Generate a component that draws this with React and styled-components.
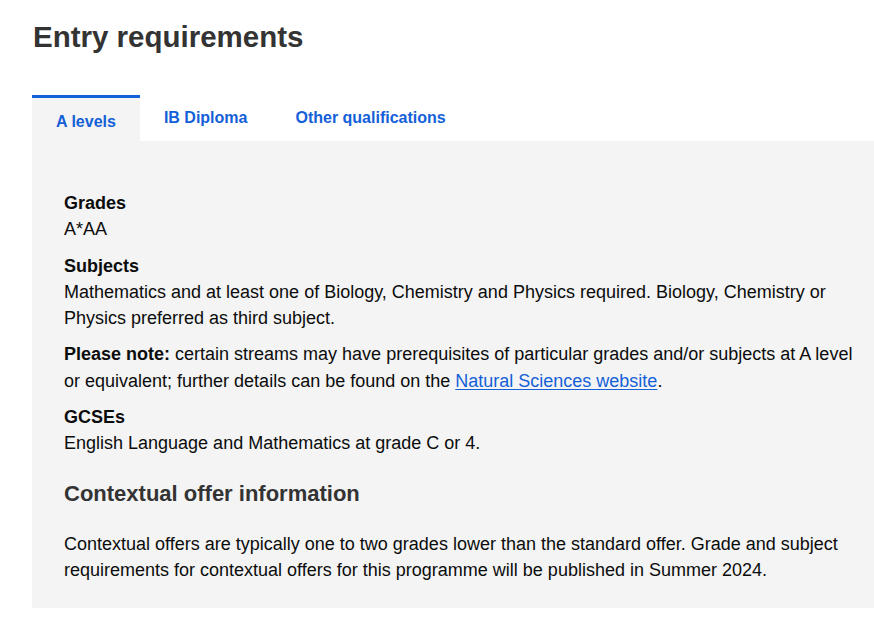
import { useState } from "react";
import styled, { createGlobalStyle } from "styled-components";

const GlobalStyle = createGlobalStyle`
  body {
    margin: 0;
    background: #ffffff;
    font-family: "Liberation Sans", Arial, Helvetica, sans-serif;
    color: #0b0c0c;
  }
`;

const tabs = ["A levels", "IB Diploma", "Other qualifications"];

function App() {
  const [active, setActive] = useState(0);

  return (
    <Page>
      <GlobalStyle />
      <Title>Entry requirements</Title>
      <TabList>
        {tabs.map((t, i) => (
          <Tab key={t} $active={i === active} onClick={() => setActive(i)}>
            {t}
          </Tab>
        ))}
      </TabList>
      <Panel>
        <Label>Grades</Label>
        <Text>A*AA</Text>
        <Label>Subjects</Label>
        <Text>
          Mathematics and at least one of Biology, Chemistry and Physics required. Biology,
          Chemistry or Physics preferred as third subject.
        </Text>
        <Text>
          <strong>Please note:</strong> certain streams may have prerequisites of particular
          grades and/or subjects at A level or equivalent; further details can be found on the{" "}
          <Link href="#">Natural Sciences website</Link>.
        </Text>
        <Label>GCSEs</Label>
        <Text>English Language and Mathematics at grade C or 4.</Text>
        <SubHeading>Contextual offer information</SubHeading>
        <Text>
          Contextual offers are typically one to two grades lower than the standard offer. Grade
          and subject requirements for contextual offers for this programme will be published in
          Summer 2024.
        </Text>
      </Panel>
    </Page>
  );
}

const Page = styled.div`
  padding: 0 0 15px 32px;
`;

const Title = styled.h1`
  margin: 0;
  padding: 18px 0 0 1px;
  font-size: 29.5px;
  line-height: 38px;
  font-weight: 700;
  color: #333333;
`;

const TabList = styled.div`
  display: flex;
  margin-top: 39px;
  height: 46px;
`;

const Tab = styled.button`
  border: none;
  border-top: 3px solid ${(p) => (p.$active ? "#1460d8" : "transparent")};
  background: ${(p) => (p.$active ? "#f4f4f4" : "transparent")};
  padding: ${(p) => (p.$active ? "15px 24px 10px" : "11px 24px 14px")};
  font-family: "Liberation Sans", Arial, sans-serif;
  font-size: 16px;
  line-height: 18px;
  font-weight: 700;
  color: #1460d8;
  cursor: pointer;
`;

const Panel = styled.div`
  background: #f4f4f4;
  padding: 49px 4px 15px 32px;
`;

const Label = styled.h3`
  margin: 0;
  font-size: 18px;
  line-height: 26.3px;
  font-weight: 700;
`;

const Text = styled.p`
  margin: 0 0 10px;
  font-size: 18px;
  line-height: 26.3px;

  strong {
    font-weight: 700;
  }
`;

const Link = styled.a`
  color: #1460d8;
  text-decoration: underline;
  text-underline-offset: 2px;
`;

const SubHeading = styled.h2`
  margin: 24px 0 24px;
  font-size: 22px;
  line-height: 26px;
  font-weight: 700;
  color: #333333;
`;

export default App;
